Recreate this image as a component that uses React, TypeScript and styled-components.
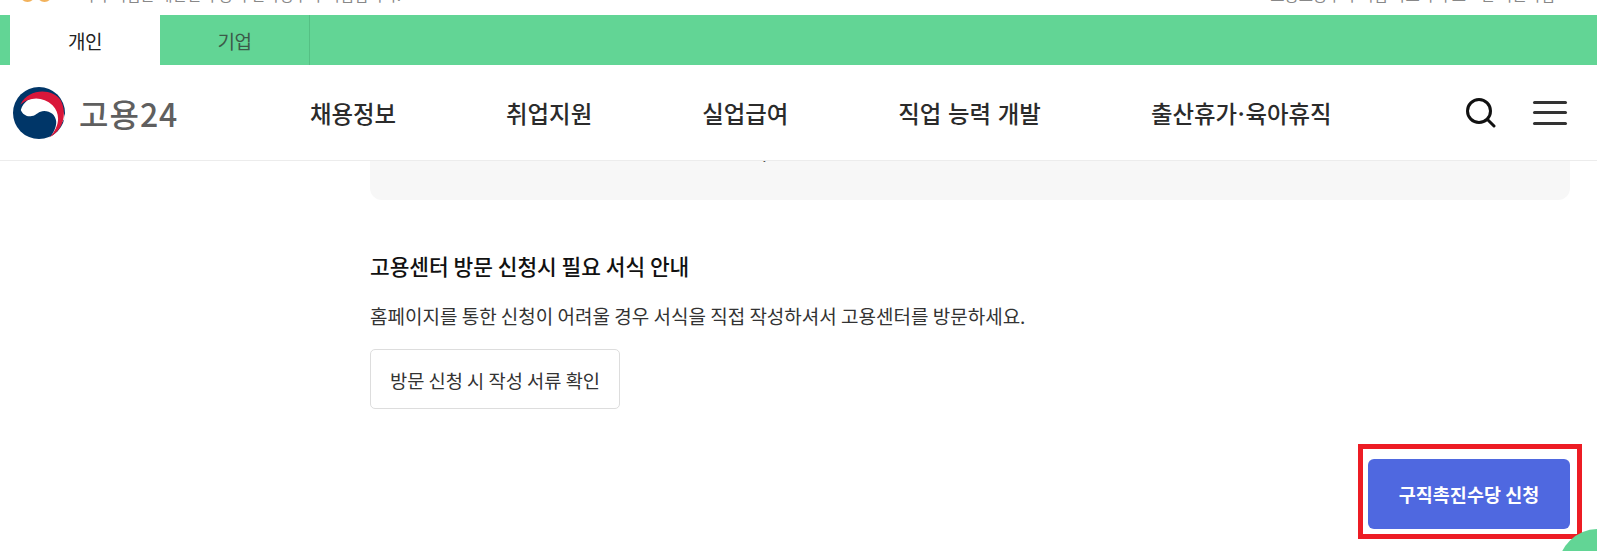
import React from "react"
import styled, { createGlobalStyle } from "styled-components"

const GlobalStyle = createGlobalStyle`
  html, body {
    margin: 0;
    padding: 0;
    height: 551px;
    overflow: hidden;
    background: #fff;
    font-family: "Noto Sans CJK KR", "Noto Sans", sans-serif;
    color: #222;
  }
  * { box-sizing: border-box; }
`

const Page = styled.div`
  position: relative;
  width: 1597px;
  height: 551px;
  overflow: hidden;
`

const TopStrip = styled.div`
  height: 15px;
  padding: 0 42px 0 20px;
  display: flex;
  align-items: flex-end;
  justify-content: space-between;
  overflow: hidden;
`

const StripLeft = styled.div`
  display: flex;
  align-items: flex-end;
  gap: 28px;
  margin-bottom: 11px;
`

const StripRight = styled.div`
  margin-bottom: 11px;
`

const StripText = styled.span`
  display: block;
  font-size: 15.5px;
  line-height: 20px;
  color: #888;
  white-space: nowrap;
`

const Blobs = styled.span`
  display: flex;
  gap: 2px;
  margin-bottom: 2px;
`

const Blob = styled.span`
  width: 15px;
  height: 15px;
  border-radius: 50%;
  background: #f2b25c;
`

const TabBar = styled.div`
  height: 50px;
  padding-left: 10px;
  background: #62d595;
  display: flex;
`

const Tab = styled.div<{ $active?: boolean }>`
  width: 150px;
  display: flex;
  align-items: center;
  justify-content: center;
  font-size: 19px;
  letter-spacing: -0.5px;
  color: ${(p) => (p.$active ? "#222" : "#3c5a49")};
  background: ${(p) => (p.$active ? "#fff" : "transparent")};
  border-right: ${(p) => (p.$active ? "none" : "1px solid #55c084")};
`

const Header = styled.header`
  height: 96px;
  border-bottom: 1px solid #ececec;
  display: flex;
  align-items: center;
  padding-left: 12px;
`

const Logo = styled.div`
  width: 298px;
  display: flex;
  align-items: center;
  gap: 13px;
`

const LogoText = styled.span`
  font-size: 32px;
  line-height: 40px;
  font-weight: 500;
  letter-spacing: 1px;
  color: #5f5f5f;
`

const Nav = styled.nav`
  display: flex;
  gap: 110px;
`

const NavItem = styled.a`
  font-size: 23.4px;
  line-height: 32px;
  font-weight: 500;
  word-spacing: 1.5px;
  color: #2b2b2b;
  white-space: nowrap;
`

const NavDot = styled.span`
  margin: 0 -2.5px;
`

const Tools = styled.div`
  margin-left: auto;
  margin-right: 30px;
  display: flex;
  align-items: center;
  gap: 37px;
`

const Burger = styled.div`
  width: 34px;
  height: 24px;
  display: flex;
  flex-direction: column;
  justify-content: space-between;
`

const BurgerBar = styled.span`
  height: 3px;
  border-radius: 2px;
  background: #333;
`

const Main = styled.main`
  padding: 0 27px 0 370px;
`

const NoticeCard = styled.div`
  height: 39px;
  padding-left: 392px;
  background: #f7f7f7;
  border-radius: 0 0 12px 12px;
  overflow: hidden;
`

const ClippedPeriod = styled.span`
  display: block;
  font-size: 17px;
  line-height: 2px;
  height: 2px;
  margin-top: -7px;
  color: #333;
`

const Section = styled.section`
  padding-top: 50px;
`

const SectionTitle = styled.h3`
  margin: 0;
  font-size: 21.4px;
  line-height: 32px;
  font-weight: 500;
  color: #111;
`

const SectionText = styled.p`
  margin: 20px 0 0;
  font-size: 19px;
  line-height: 28px;
  color: #333;
`

const OutlineButton = styled.button`
  display: block;
  width: 250px;
  height: 60px;
  margin-top: 19px;
  padding: 0;
  background: #fff;
  border: 1px solid #ddd;
  border-radius: 5px;
  font-family: inherit;
  font-size: 18.7px;
  color: #333;
`

const ActionRow = styled.div`
  display: flex;
  justify-content: flex-end;
  margin: 35px -12px 0 0;
`

const Highlight = styled.div`
  border: 5px solid #ed1c24;
  padding: 10px 7px 5px 5px;
`

const PrimaryButton = styled.button`
  display: block;
  width: 202px;
  height: 70px;
  padding: 0;
  border: none;
  border-radius: 6px;
  background: #4f68e0;
  font-family: inherit;
  font-size: 18.5px;
  font-weight: 700;
  color: #fff;
`

const FloatingCircle = styled.div`
  position: absolute;
  right: -41px;
  bottom: -58px;
  width: 80px;
  height: 80px;
  border-radius: 50%;
  background: #62d595;
`

function TaegukMark() {
  return (
    <svg width="54" height="52" viewBox="0 0 100 100" aria-hidden="true">
      <circle cx="50" cy="50" r="50" fill="#003668" />
      <path
        d="M15 44C20 28 32 20 48 20C70 20 100 40 100 60L72 97C78 88 84 76 83 66C82 54 72 46 60 46C49 46 46 54 36 56C27 58 18 52 15 44Z"
        fill="#fff"
      />
      <path
        d="M14 34C30 2 76 2 92 26C104 50 98 82 70 97C90 76 92 52 76 35C58 18 32 18 14 34Z"
        fill="#d9173a"
      />
    </svg>
  )
}

function SearchIcon() {
  return (
    <svg width="31" height="31" viewBox="0 0 31 31" fill="none" stroke="#111" strokeWidth="3">
      <circle cx="14" cy="14" r="11.5" />
      <path d="M22.5 22.5L29 29" strokeLinecap="round" />
    </svg>
  )
}

const navItems = ["채용정보", "취업지원", "실업급여", "직업 능력 개발"]

export default function App(): JSX.Element {
  return (
    <Page>
      <GlobalStyle />
      <TopStrip>
        <StripLeft>
          <Blobs>
            <Blob />
            <Blob />
          </Blobs>
          <StripText>이 누리집은 대한민국 공식 전자정부 누리집입니다.</StripText>
        </StripLeft>
        <StripRight>
          <StripText>고용노동부 누리집 바로가기 로그인 회원가입</StripText>
        </StripRight>
      </TopStrip>

      <TabBar>
        <Tab $active>개인</Tab>
        <Tab>기업</Tab>
      </TabBar>

      <Header>
        <Logo>
          <TaegukMark />
          <LogoText>고용24</LogoText>
        </Logo>
        <Nav>
          {navItems.map((item) => (
            <NavItem key={item}>{item}</NavItem>
          ))}
          <NavItem>
            출산휴가<NavDot>·</NavDot>육아휴직
          </NavItem>
        </Nav>
        <Tools>
          <SearchIcon />
          <Burger>
            <BurgerBar />
            <BurgerBar />
            <BurgerBar />
          </Burger>
        </Tools>
      </Header>

      <Main>
        <NoticeCard>
          <ClippedPeriod>.</ClippedPeriod>
        </NoticeCard>
        <Section>
          <SectionTitle>고용센터 방문 신청시 필요 서식 안내</SectionTitle>
          <SectionText>홈페이지를 통한 신청이 어려울 경우 서식을 직접 작성하셔서 고용센터를 방문하세요.</SectionText>
          <OutlineButton>방문 신청 시 작성 서류 확인</OutlineButton>
        </Section>
        <ActionRow>
          <Highlight>
            <PrimaryButton>구직촉진수당 신청</PrimaryButton>
          </Highlight>
        </ActionRow>
      </Main>

      <FloatingCircle />
    </Page>
  )
}
